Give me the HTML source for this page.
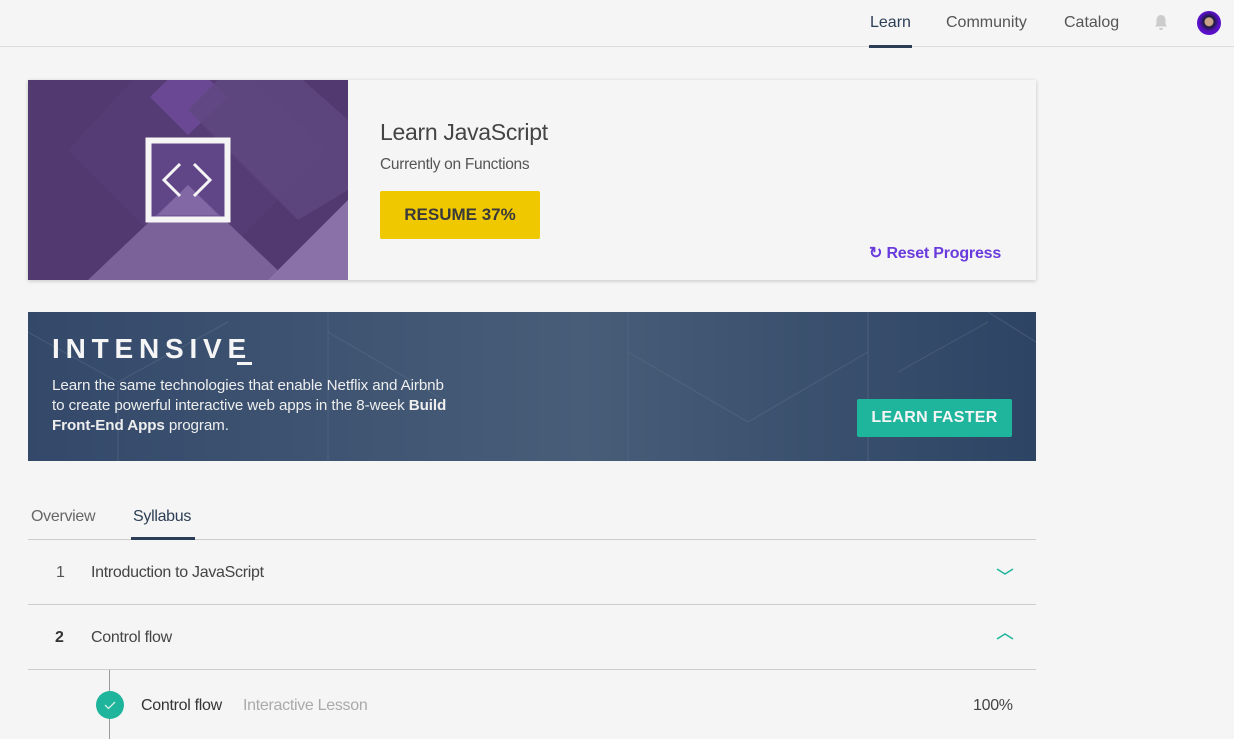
<!DOCTYPE html>
<html><head><meta charset="utf-8"><style>
*{box-sizing:border-box;margin:0;padding:0}
body{width:1234px;height:739px;overflow:hidden;background:#f5f5f5;font-family:"Liberation Sans",sans-serif;color:#333;position:relative}
.abs{position:absolute}
.hdr{left:0;top:0;width:1234px;height:47px;border-bottom:1px solid #ddd}
.nav{top:14px;font-size:16px;color:#555}
.card{left:28px;top:80px;width:1008px;height:200px;background:#f5f5f5;box-shadow:0 1px 4px rgba(0,0,0,.2)}
.banner{left:28px;top:312px;width:1008px;height:149px;background:linear-gradient(90deg,#34496a,#475d78 55%,#2d4464)}
.row{left:28px;width:1008px;border-bottom:1px solid #ccc}
</style></head><body>
<div class="abs hdr"></div>
<div class="abs nav" style="left:870px;color:#2c3e55">Learn</div>
<div class="abs" style="left:869px;top:45px;width:43px;height:3px;background:#2c3e55"></div>
<div class="abs nav" style="left:946px">Community</div>
<div class="abs nav" style="left:1064px">Catalog</div>
<svg class="abs" style="left:1153px;top:14px" width="16" height="17" viewBox="0 0 16 17"><path d="M8 1C5 1 3.5 3.5 3.5 6v4L2 12.5h12L12.5 10V6C12.5 3.5 11 1 8 1z M6 14a2 2 0 0 0 4 0z" fill="#ccc"/></svg>
<div class="abs" style="left:1197px;top:11px;width:24px;height:24px;border-radius:50%;background:radial-gradient(circle at 50% 45%,#c9a48a 0 4px,#1b1b3a 5px,#5a10c8 10px)"></div>

<div class="abs card">
<svg class="abs" style="left:0;top:0" width="320" height="200" viewBox="0 0 320 200">
<rect width="320" height="200" fill="#523a70"/>
<polygon points="160,-60 300,70 170,200 40,70" fill="#563d76" opacity=".8"/>
<polygon points="160,-20 200,17 160,55 122,17" fill="#6b4894"/>
<polygon points="230,-40 320,40 320,110 270,140 160,30" fill="#5f4880" opacity=".8"/>
<polygon points="160,105 260,200 60,200" fill="#7b6399"/>
<polygon points="320,120 320,200 240,200" fill="#8a72a8"/>
<polygon points="160,105 190,135 130,135" fill="#9783b2"/>
<rect x="120" y="60" width="80" height="80" fill="#6e4f9a" opacity=".5"/>
<rect x="120.5" y="60.5" width="79" height="79" fill="none" stroke="#f5f5f5" stroke-width="6"/>
<path d="M152 84 L136 100 L152 116 M166 84 L182 100 L166 116" stroke="#f5f5f5" stroke-width="3" fill="none"/>
</svg>
<div class="abs" style="left:352px;top:39px;font-size:23px;color:#444;letter-spacing:-.3px">Learn JavaScript</div>
<div class="abs" style="left:352px;top:76px;font-size:15.5px;color:#555;letter-spacing:-.3px">Currently on Functions</div>
<div class="abs" style="left:352px;top:111px;width:160px;height:48px;background:#f0c800;border-radius:2px;font-size:17px;font-weight:bold;color:#3a3a3a;text-align:center;line-height:48px">RESUME 37%</div>
<div class="abs" style="left:841px;top:163px;font-size:16px;font-weight:bold;color:#6a3bdc;letter-spacing:-.2px">&#x21bb; Reset Progress</div>
</div>

<div class="abs banner">
<svg class="abs" style="left:0;top:0" width="1008" height="149"><g stroke="#5b7088" stroke-width="1" fill="none" opacity=".5"><path d="M0 20 L90 70 L90 149 M90 70 L200 10 M300 0 L300 149 M300 20 L420 90 M600 0 L600 149 M600 40 L720 110 L840 40 M840 0 L840 149 M870 60 L960 10 M960 0 L1008 30"/></g></svg>
<div class="abs" style="left:24px;top:21px;font-size:28px;font-weight:bold;letter-spacing:5.8px;color:#f5f5f5">INTENSIVE</div>
<div class="abs" style="left:209px;top:50px;width:15px;height:3px;background:#f5f5f5"></div>
<div class="abs" style="left:24px;top:64px;font-size:15.2px;line-height:20px;color:#eee;width:460px;white-space:nowrap;letter-spacing:-.1px">Learn the same technologies that enable Netflix and Airbnb<br>to create powerful interactive web apps in the 8-week <b>Build</b><br><b>Front-End Apps</b> program.</div>
<div class="abs" style="left:829px;top:87px;width:155px;height:38px;background:#1fb59c;border-radius:2px;color:#f5f5f5;font-weight:bold;font-size:16px;letter-spacing:.3px;text-align:center;line-height:38px">LEARN FASTER</div>
</div>

<div class="abs" style="left:31px;top:508px;font-size:16px;color:#666;letter-spacing:-.3px">Overview</div>
<div class="abs" style="left:133px;top:508px;font-size:16px;color:#2c3e55;letter-spacing:-.3px">Syllabus</div>
<div class="abs row" style="top:539px;height:1px;border:0;background:#ccc"></div>
<div class="abs" style="left:131px;top:537px;width:64px;height:3px;background:#2c3e55"></div>
<div class="abs row" style="top:540px;height:65px"></div>
<div class="abs" style="left:56px;top:564px;font-size:16px;color:#555">1</div>
<div class="abs" style="left:91px;top:564px;font-size:16px;color:#444;letter-spacing:-.3px">Introduction to JavaScript</div>
<svg class="abs" style="left:996px;top:568px" width="18" height="8"><path d="M1 1 L9 6 L17 1" stroke="#1fb59c" stroke-width="1.5" fill="none"/></svg>
<div class="abs row" style="top:605px;height:65px"></div>
<div class="abs" style="left:55px;top:629px;font-size:16px;font-weight:bold;color:#333">2</div>
<div class="abs" style="left:91px;top:629px;font-size:16px;color:#444;letter-spacing:-.3px">Control flow</div>
<svg class="abs" style="left:996px;top:632px" width="18" height="8"><path d="M1 7 L9 2 L17 7" stroke="#1fb59c" stroke-width="1.5" fill="none"/></svg>
<div class="abs" style="left:109px;top:670px;width:1px;height:69px;background:#999"></div>
<div class="abs" style="left:96px;top:691px;width:28px;height:28px;border-radius:50%;background:#1fb59c"></div>
<svg class="abs" style="left:96px;top:691px" width="28" height="28"><path d="M9 14 L12.5 17.5 L19 11" stroke="#d5f0ea" stroke-width="1.3" fill="none"/></svg>
<div class="abs" style="left:141px;top:697px;font-size:16px;color:#333;letter-spacing:-.3px">Control flow</div>
<div class="abs" style="left:243px;top:697px;font-size:16px;color:#aaa;letter-spacing:-.3px">Interactive Lesson</div>
<div class="abs" style="left:973px;top:697px;font-size:16px;color:#444;letter-spacing:-.3px">100%</div>
</body></html>
